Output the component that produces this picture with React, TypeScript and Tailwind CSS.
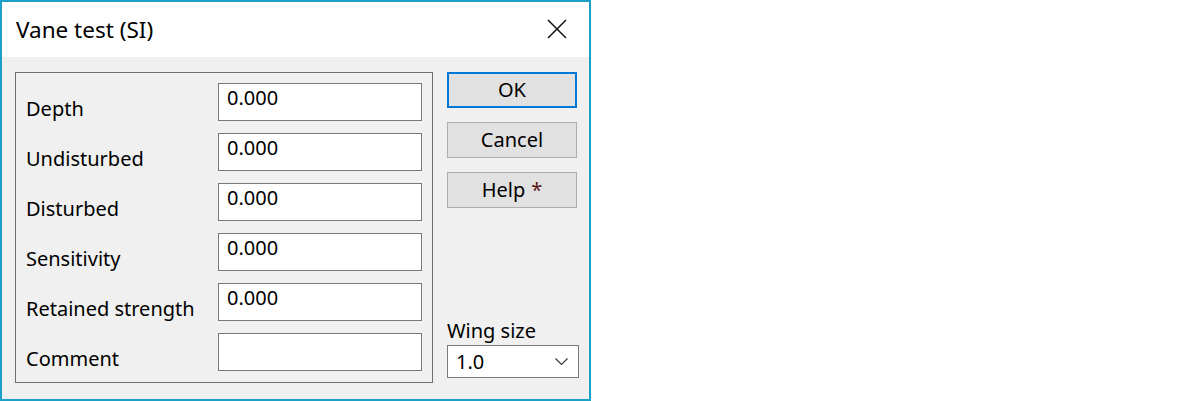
import React from "react";

const rows = [
  { label: "Depth", value: "0.000" },
  { label: "Undisturbed", value: "0.000" },
  { label: "Disturbed", value: "0.000" },
  { label: "Sensitivity", value: "0.000" },
  { label: "Retained strength", value: "0.000" },
  { label: "Comment", value: "" },
];

function Button({ children, primary }: { children: React.ReactNode; primary?: boolean }) {
  return (
    <div
      className={`h-[36px] w-[130px] bg-[#e1e1e1] flex items-center justify-center text-[20px] leading-[24px] text-black ${
        primary ? "border-2 border-[#0078d7]" : "border border-[#adadad]"
      }`}
    >
      {children}
    </div>
  );
}

export default function App() {
  return (
    <div className="w-[1200px] h-[401px] bg-white" style={{ fontFamily: '"Noto Sans", sans-serif' }}>
      <div className="w-[591px] h-[401px] border-2 border-[#1ca1c6] flex flex-col">
        {/* Title bar */}
        <div className="h-[55px] bg-white flex items-start justify-between">
          <div className="pl-[14px] pt-[14px] text-[22.5px] leading-[28px] text-black">Vane test (SI)</div>
          <svg className="mt-[17px] mr-[22px]" width="20" height="20" viewBox="0 0 20 20">
            <path d="M1 1L19 19M19 1L1 19" stroke="#111" strokeWidth="1.5" fill="none" />
          </svg>
        </div>

        {/* Body */}
        <div className="flex-1 bg-[#f0f0f0] flex pl-[13px] pt-[15px]">
          <div className="w-[418px] h-[311px] border border-[#707070] pl-[10px] pt-[10px] flex flex-col gap-[12px]">
            {rows.map((r) => (
              <div key={r.label} className="flex h-[38px]">
                <div className="w-[192px] mt-[14px] text-[20px] leading-[24px] text-black">{r.label}</div>
                <div className="w-[204px] h-[38px] border border-[#7a7a7a] bg-white pl-[8px] pt-[2px] text-[20px] leading-[24px] text-black">
                  {r.value}
                </div>
              </div>
            ))}
          </div>

          <div className="ml-[14px] h-[311px] flex flex-col justify-between">
            <div className="flex flex-col gap-[14px]">
              <Button primary>OK</Button>
              <Button>Cancel</Button>
              <Button>
                Help <span className="ml-[6px] text-[#5a1414]">*</span>
              </Button>
            </div>
            <div className="mb-[5px]">
              <div className="text-[20px] leading-[24px] text-black">Wing size</div>
              <div className="mt-[2px] w-[132px] h-[33px] border border-[#7a7a7a] bg-white flex items-center justify-between pl-[8px] pr-[10px]">
                <span className="text-[20px] leading-[24px] text-black">1.0</span>
                <svg width="13" height="8" viewBox="0 0 13 8">
                  <path d="M0.5 0.5L6.5 6.5L12.5 0.5" stroke="#333" strokeWidth="1.1" fill="none" />
                </svg>
              </div>
            </div>
          </div>
        </div>
      </div>
    </div>
  );
}
